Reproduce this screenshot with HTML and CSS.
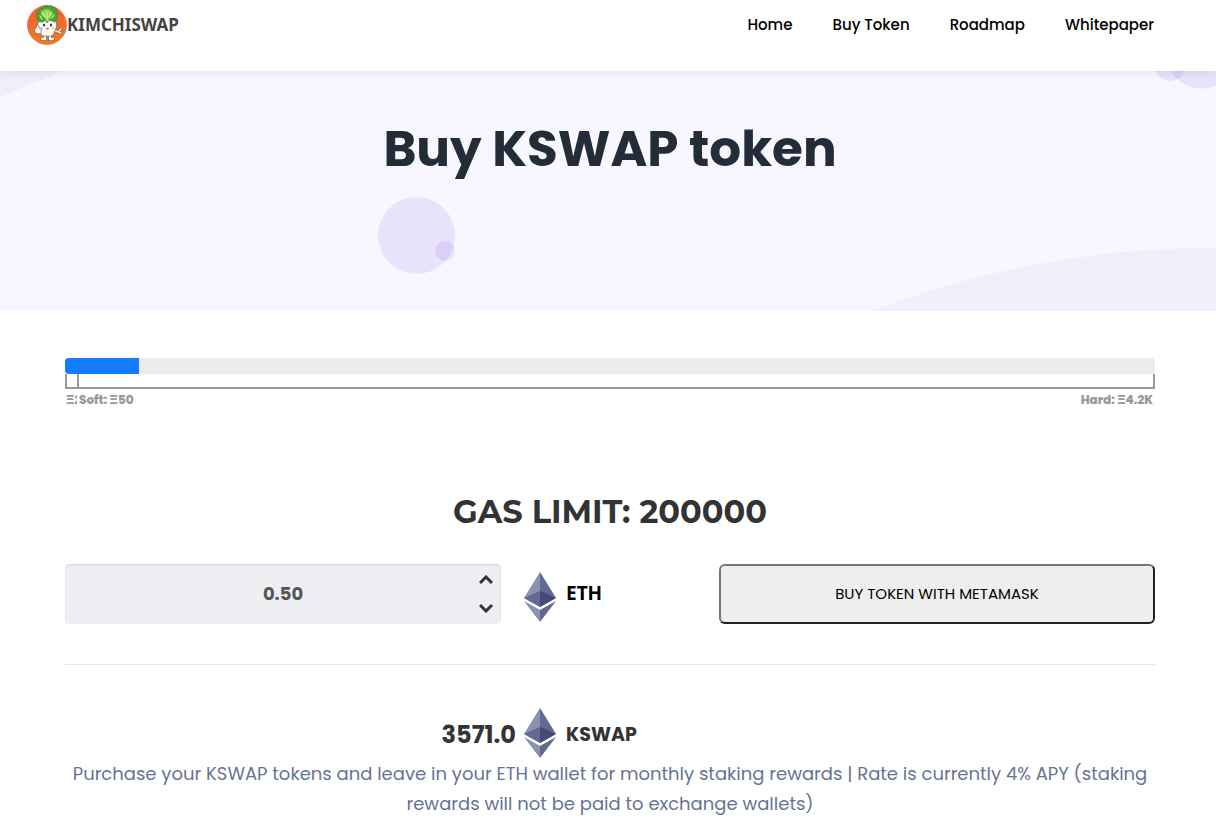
FILE: index.html
```html
<!DOCTYPE html>
<html lang="en">
<head>
<meta charset="utf-8">
<meta name="viewport" content="width=device-width, initial-scale=1">
<title>Buy KSWAP token</title>
<link rel="stylesheet" href="styles.css">
</head>
<body>
<svg class="defs" aria-hidden="true">
  <symbol id="eth" viewBox="0 0 32 50">
    <path fill="#8a92b2" d="M16 0 0 26 16 35Z"/>
    <path fill="#62688f" d="M16 0 32 26 16 35Z"/>
    <path fill="#62688f" d="M16 19 0 26 16 35Z"/>
    <path fill="#454a75" d="M16 19 32 26 16 35Z"/>
    <path fill="#8a92b2" d="M0 29 16 38V50Z"/>
    <path fill="#62688f" d="M32 29 16 38V50Z"/>
  </symbol>
</svg>
<header class="header">
  <a class="brand" href="#">
    <svg class="brand-mark" viewBox="0 0 40 40" aria-hidden="true">
      <defs>
        <linearGradient id="disc" x1="0" y1="0" x2="0" y2="1">
          <stop offset="0" stop-color="#ee5f35"/>
          <stop offset="1" stop-color="#f27a20"/>
        </linearGradient>
      </defs>
      <circle cx="20" cy="20" r="19.5" fill="url(#disc)" stroke="#e8805c"/>
      <path d="M18 30v4h-3M23 30v4h3" fill="none" stroke="#555" stroke-width="3.6" stroke-linecap="round"/>
      <path d="M18 30v4h-3M23 30v4h3" fill="none" stroke="#fff" stroke-width="2.4" stroke-linecap="round"/>
      <path d="M27 25l4 2 3-3M31 27l3 1" fill="none" stroke="#666" stroke-width="2.8" stroke-linecap="round"/>
      <path d="M27 25l4 2 3-3M31 27l3 1" fill="none" stroke="#ffe9c8" stroke-width="1.7" stroke-linecap="round"/>
      <path d="M12 15c-2 5-1 8 1 10 0 3 2 6 4 6h7c3-1 3-4 4-6 2-3 2-6 0-10Z" fill="#fffdf8" stroke="#666" stroke-width=".6"/>
      <path d="M8 24c2-1 1-4 2-4 2 0 2 2 2 3 2 0 3 1 2 3 1 2-1 3-3 3-3 0-4-3-3-5Z" fill="#fffdf8" stroke="#555" stroke-width=".7"/>
      <path d="M13 17c-2 0-1-2-3-3 1-2-1-3 0-5 0-2 2-2 2-3 0-3 3-3 4-3 1-3 4-3 5-1 2-2 5-1 5 1 3-1 4 2 3 4 3 1 2 4 1 5 1 3-1 4-3 5l-4-2-2 1-1 2-2-3-2 2Z" fill="#45aa35" stroke="#2a7a24" stroke-width=".6"/>
      <path d="M14 8c0-3 3-2 4-4 2 1 4-1 5 2 3 0 3 3 2 5l-3 4-2 2-2-4c-2-1-4-3-4-5Z" fill="#8fd250"/>
      <path d="M18 12 16 8M20 15V7M22 12l2-5M15 14l-2-3M25 13l2-3" fill="none" stroke="#dff5a0" stroke-width="1.1" stroke-linecap="round"/>
      <ellipse cx="17" cy="20" rx="1.1" ry="1.6" fill="#263640"/>
      <ellipse cx="24" cy="20" rx="1.1" ry="1.6" fill="#263640"/>
      <circle cx="15" cy="23" r="1.1" fill="#f4b0b0"/>
      <circle cx="26" cy="23" r="1.1" fill="#f4b0b0"/>
      <path d="M19 23q1.500 3 3 0Z" fill="#c64436"/>
    </svg>
    <span class="brand-name">KIMCHISWAP</span>
  </a>
  <nav class="nav">
    <a href="#">Home</a>
    <a href="#">Buy Token</a>
    <a href="#">Roadmap</a>
    <a href="#">Whitepaper</a>
  </nav>
</header>
<section class="hero">
  <svg class="hero-art" viewBox="0 0 1216 240" preserveAspectRatio="xMidYMid slice" aria-hidden="true">
    <path d="M0 0h63Q30 13 0 26Z" fill="#f0eefb"/>
    <circle cx="1212" cy="1127" r="950" fill="#f0eefb"/>
    <g fill="#7c54e0" fill-opacity=".12">
      <circle cx="416.500" cy="164.500" r="38.500"/>
      <circle cx="445" cy="180" r="10"/>
      <circle cx="1202" cy="-20" r="37.500"/>
      <circle cx="1170" cy="-5" r="15"/>
    </g>
  </svg>
  <h1 class="hero-title">Buy KSWAP token</h1>
</section>
<main class="main">
  <section class="sale" aria-label="Sale progress">
    <div class="progress" role="progressbar" aria-label="Raised" aria-valuemin="0" aria-valuemax="4200" aria-valuenow="286">
      <div class="progress-fill" style="width:6.8%"></div>
    </div>
    <div class="scale">
      <span class="scale-start"></span>
      <span class="scale-rest"></span>
    </div>
    <div class="caps">
      <span class="caps-start">Ξ2</span>
      <span class="caps-soft">Soft: Ξ50</span>
      <span>Hard: Ξ4.2K</span>
    </div>
  </section>
  <h2 class="gas">GAS LIMIT: 200000</h2>
  <form class="purchase">
    <div class="amount">
      <input class="amount-input" type="text" inputmode="decimal" value="0.50" aria-label="Amount in ETH">
      <div class="stepper">
        <button class="step" type="button" aria-label="Increase"><svg viewBox="0 0 14 10"><path d="M1 8 7 2l6 6"/></svg></button>
        <button class="step" type="button" aria-label="Decrease"><svg viewBox="0 0 14 10"><path d="M1 2 7 8l6-6"/></svg></button>
      </div>
    </div>
    <div class="currency">
      <svg class="eth"><use href="#eth"/></svg>
      <span class="currency-name">ETH</span>
    </div>
    <button class="buy" type="button">BUY TOKEN WITH METAMASK</button>
  </form>
  <div class="result">
    <strong class="result-value">3571.0</strong>
    <svg class="eth"><use href="#eth"/></svg>
    <strong class="result-unit">KSWAP</strong>
  </div>
  <p class="note">Purchase your KSWAP tokens and leave in your ETH wallet for monthly staking rewards | Rate is currently 4% APY (staking rewards will not be paid to exchange wallets)</p>
</main>
</body>
</html>
```
FILE: styles.css
```css
* { box-sizing: border-box; }

body {
  margin: 0;
  background: #fff;
  color: #000;
  font-family: Poppins, Inter, sans-serif;
}

.defs { display: none; }

.header {
  position: relative;
  z-index: 1;
  display: flex;
  justify-content: space-between;
  align-items: flex-start;
  padding: 5px 62px 26px 27px;
  background: #fff;
  box-shadow: 0 2px 10px rgba(0, 0, 0, .08);
}

.brand {
  display: flex;
  align-items: center;
  color: #444;
  text-decoration: none;
}

.brand-mark { width: 40px; height: 40px; }

.brand-name {
  font: 700 17px/40px "Noto Sans", sans-serif;
}

.nav {
  display: flex;
  gap: 40px;
}

.nav a {
  color: #000;
  font-size: 15px;
  font-weight: 500;
  line-height: 40px;
  text-decoration: none;
}

.hero {
  position: relative;
  overflow: hidden;
  padding: 42px 61px 126px 65px;
  background: #f8f6ff;
}

.hero-art {
  position: absolute;
  inset: 0;
  width: 100%;
  height: 100%;
}

.hero-title {
  position: relative;
  margin: 0;
  color: #232d3a;
  font-size: 50px;
  font-weight: 700;
  line-height: 72px;
  text-align: center;
}

.main { padding: 47px 61px 10px 65px; }

.progress {
  height: 16px;
  overflow: hidden;
  border-radius: 4px;
  background: #e9ecef;
}

.progress-fill {
  height: 100%;
  background: #147bff;
}

.scale { display: flex; height: 15px; }

.scale-start {
  width: 12px;
  border: solid #999;
  border-width: 0 0 2px 2px;
}

.scale-rest {
  flex: 1;
  border: 2px solid #999;
  border-top: 0;
}

.caps {
  display: flex;
  padding: 1px 2px 0 1px;
  color: #999;
  font-size: 12px;
  font-weight: 800;
  line-height: 20px;
}

.caps-start { width: 11px; overflow: hidden; }

.caps-soft { flex: 1; padding-left: 2px; }

.gas {
  margin: 82px 0 32px;
  color: #333;
  font-family: Montserrat, Inter, sans-serif;
  font-size: 32px;
  font-weight: 700;
  line-height: 40px;
  text-align: center;
}

.purchase {
  display: grid;
  grid-template-columns: 2fr 1fr 2fr;
  padding-bottom: 40px;
  border-bottom: 1px solid #e5e5e5;
}

.amount {
  display: flex;
  height: 60px;
  border-radius: 5px;
  background: #eeeff2;
  box-shadow: inset 0 1px 2px rgba(0, 0, 0, .12);
}

.amount-input {
  flex: 1;
  min-width: 0;
  padding: 0 0 0 30px;
  border: 0;
  background: none;
  color: #555;
  font: 700 18px/28px Poppins, Inter, sans-serif;
  text-align: center;
}

.stepper {
  display: grid;
  grid-template-rows: 1fr 1fr;
  width: 30px;
  padding: 2px 0;
}

.step {
  display: grid;
  place-items: center;
  padding: 0;
  border: 0;
  background: none;
}

.step svg {
  width: 14px;
  height: 10px;
  fill: none;
  stroke: #333;
  stroke-width: 3;
}

.currency {
  display: flex;
  align-items: center;
  gap: 10px;
  padding: 6px 0 0 23px;
}

.eth { flex: none; width: 32px; height: 50px; }

.currency-name {
  padding-bottom: 8px;
  font: 700 19px/24px "Noto Sans", sans-serif;
}

.buy {
  height: 60px;
  border: 2px solid;
  border-color: #767676 #212121 #212121 #767676;
  border-radius: 6px;
  background: #eee;
  color: #000;
  font: 400 15px/24px Poppins, Inter, sans-serif;
}

.result {
  display: grid;
  grid-template-columns: 1fr 32px 1fr;
  align-items: center;
  gap: 8px;
  padding: 43px 140px 0 0;
  color: #333;
}

.result-value {
  padding-top: 3px;
  font-size: 24px;
  font-weight: 700;
  line-height: 32px;
  text-align: right;
}

.result-unit {
  padding: 3px 0 0 2px;
  font-size: 19px;
  font-weight: 700;
  line-height: 32px;
}

.note {
  margin: 0;
  padding-top: 1px;
  color: #677294;
  font-size: 18px;
  line-height: 30px;
  text-align: center;
}
```
